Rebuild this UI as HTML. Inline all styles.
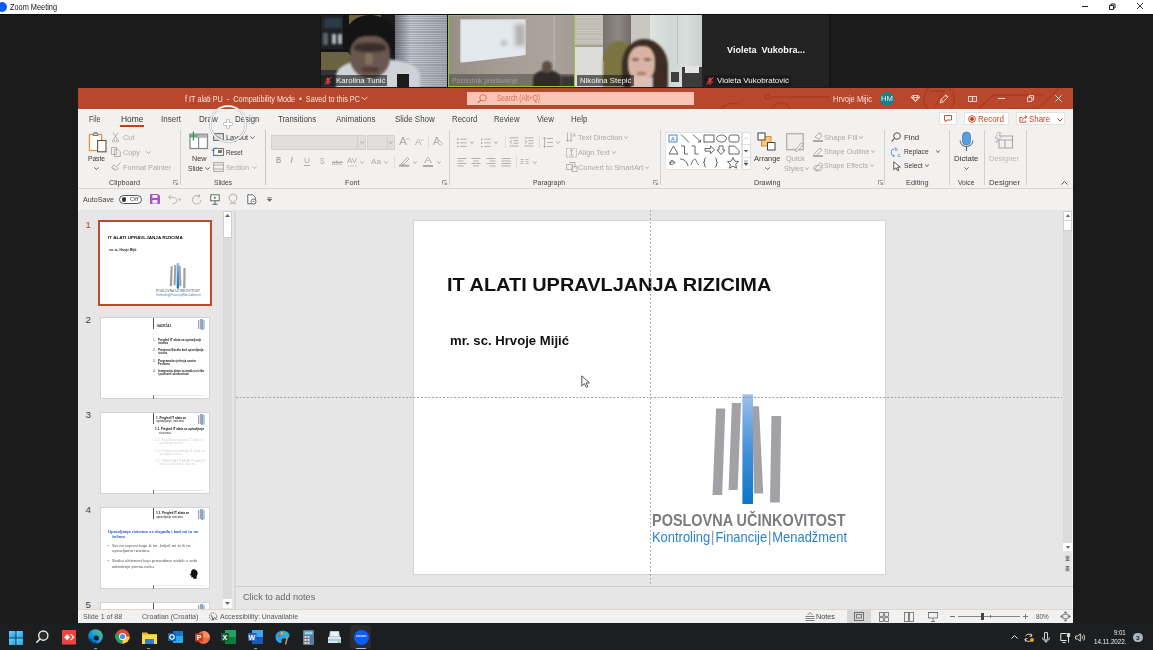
<!DOCTYPE html>
<html><head><meta charset="utf-8">
<style>
*{margin:0;padding:0;box-sizing:border-box}
html,body{width:1153px;height:650px;overflow:hidden;background:#1b1b1b;font-family:"Liberation Sans",sans-serif;position:relative}
.a{position:absolute}
.t{position:absolute;white-space:nowrap;line-height:1}
svg{position:absolute;overflow:visible}
</style></head><body>
<div class="a" style="left:0px;top:0px;width:1153px;height:14px;background:#fff;"></div>
<div class="a" style="left:0px;top:14px;width:1153px;height:1px;background:#0a0a0a;"></div>
<div class="a" style="left:-3px;top:2px;width:10px;height:10px;border-radius:50%;background:#0b5cff"></div>
<div class="t" style="left:10px;top:2.90px;font-size:8.5px;color:#111;font-weight:400;transform:scaleX(0.865);transform-origin:0 0;">Zoom Meeting</div>
<div class="a" style="left:1082px;top:6px;width:6px;height:1px;background:#222;"></div>
<svg style="left:1108.5px;top:2.5px;" width="7" height="7" viewBox="0 0 7 7"><path d="M.5 2.5h4v4h-4z M2 2.5V1h4v4H4.5" stroke="#222" stroke-width="1" fill="none"/></svg>
<svg style="left:1137px;top:3px;" width="6" height="6" viewBox="0 0 6 6"><path d="M0 0L6 6M6 0L0 6" stroke="#222" stroke-width=".9"/></svg>
<div class="a" style="left:320px;top:15px;width:510px;height:72px;background:#141414;"></div>
<div class="a" style="left:321px;top:15px;width:126px;height:72px;overflow:hidden;background:#6e6540"><div class="a" style="left:0px;top:0px;width:26px;height:36px;background:#1e2226;"></div><div class="a" style="left:3px;top:3px;width:18px;height:10px;background:#2d3a48;filter:blur(1.2px)"></div><div class="a" style="left:2px;top:18px;width:5px;height:12px;background:#5a6570;filter:blur(.9px)"></div><div class="a" style="left:11px;top:19px;width:4px;height:10px;background:#b4bcc4;filter:blur(.9px)"></div><div class="a" style="left:17px;top:19px;width:4px;height:10px;background:#b0b8c0;filter:blur(.9px)"></div><div class="a" style="left:0px;top:34px;width:28px;height:3px;background:#141414;"></div><div class="a" style="left:0px;top:37px;width:30px;height:22px;background:#6a6240;filter:blur(.5px)"></div><div class="a" style="left:0px;top:55px;width:20px;height:17px;background:#30333a;"></div><div class="a" style="left:22px;top:0px;width:6px;height:36px;background:#141414;"></div><div class="a" style="left:60px;top:0px;width:15px;height:48px;background:#1a1a1a;"></div><div class="a" style="left:74px;top:0px;width:52px;height:72px;background:repeating-linear-gradient(180deg,#c0c4cc 0 1px,#a4a9b2 1px 2.2px);filter:blur(.3px)"></div><div class="a" style="left:74px;top:0px;width:52px;height:72px;background:linear-gradient(90deg,rgba(30,30,40,.45),rgba(255,255,255,.05) 30%,rgba(30,30,40,.15));"></div><div class="a" style="left:15px;top:44px;width:84px;height:36px;background:#cfd3d8;border-radius:45% 45% 10% 10%;filter:blur(.8px)"></div><div class="a" style="left:76px;top:59px;width:12px;height:13px;background:#1c1c1c;filter:blur(.4px)"></div><div class="a" style="left:24px;top:0px;width:50px;height:46px;background:#141414;border-radius:48% 48% 40% 40%;filter:blur(.4px)"></div><div class="a" style="left:29px;top:21px;width:40px;height:42px;background:#6a5850;border-radius:40% 40% 48% 48%;filter:blur(.8px)"></div><div class="a" style="left:33px;top:28px;width:32px;height:9px;background:#3a2e2a;border-radius:40%;filter:blur(1.5px)"></div><div class="a" style="left:44px;top:38px;width:8px;height:12px;background:#85705f;border-radius:40%;filter:blur(1.2px)"></div><div class="a" style="left:40px;top:52px;width:18px;height:5px;background:#4e3e38;border-radius:40%;filter:blur(1.2px)"></div></div>
<div class="a" style="left:448px;top:15px;width:127px;height:72px;overflow:hidden;background:#9f968e;border:1px solid #8dc63f"><div class="a" style="left:0px;top:0px;width:127px;height:72px;background:linear-gradient(90deg,#978e86,#a59c94 40%,#aca49c 80%,#a39b93);"></div><div class="a" style="left:11px;top:3px;width:66px;height:44px;background:#e2e8ee;filter:blur(1.3px);clip-path:polygon(0 0,100% 0,100% 82%,0 100%)"></div><div class="a" style="left:66px;top:8px;width:10px;height:22px;background:#b4b2b0;filter:blur(2px)"></div><div class="a" style="left:52px;top:24px;width:6px;height:6px;background:#c4c8ce;filter:blur(1.5px)"></div><div class="a" style="left:104px;top:0px;width:2px;height:60px;background:#b5aea6;filter:blur(.6px)"></div><div class="a" style="left:0px;top:58px;width:127px;height:14px;background:rgba(70,66,62,.5);filter:blur(.5px)"></div><div class="a" style="left:84px;top:54px;width:28px;height:20px;background:#2f2b28;border-radius:45% 45% 0 0;filter:blur(1.2px)"></div><div class="a" style="left:93px;top:45px;width:10px;height:12px;background:#5e4e44;border-radius:45%;filter:blur(1px)"></div><div class="a" style="left:112px;top:60px;width:14px;height:12px;background:#3a3836;filter:blur(1px)"></div></div>
<div class="a" style="left:575px;top:15px;width:127px;height:72px;overflow:hidden;background:#d5d8d3"><div class="a" style="left:0px;top:0px;width:30px;height:31px;background:repeating-linear-gradient(180deg,#c9c7bd 0 1px,#bdbbb1 1px 2.5px);"></div><div class="a" style="left:0px;top:30px;width:30px;height:2px;background:#a89e8c;"></div><div class="a" style="left:0px;top:32px;width:30px;height:40px;background:#dcdcd8;"></div><div class="a" style="left:28px;top:0px;width:30px;height:46px;background:linear-gradient(90deg,#7a726e,#8f8783 50%,#726a66);"></div><div class="a" style="left:56px;top:0px;width:20px;height:72px;background:#c9c7bf;"></div><div class="a" style="left:75px;top:0px;width:52px;height:72px;background:linear-gradient(90deg,#dfe6e2,#cfd8d4 40%,#d9dfdc 70%,#c8cfcc);"></div><div class="a" style="left:102px;top:0px;width:1px;height:50px;background:#b8bfbc;"></div><div class="a" style="left:28px;top:26px;width:28px;height:46px;background:#7c7440;border-radius:50% 30% 0 0;filter:blur(.8px)"></div><div class="a" style="left:47px;top:24px;width:46px;height:52px;background:#3c2c24;border-radius:48% 52% 10% 20%;filter:blur(1.2px)"></div><div class="a" style="left:53px;top:31px;width:27px;height:36px;background:#d9b4a4;border-radius:44% 40% 46% 46%;filter:blur(.8px)"></div><div class="a" style="left:56px;top:62px;width:22px;height:12px;background:#dcc0b4;filter:blur(1px)"></div><div class="a" style="left:57px;top:43px;width:7px;height:3px;background:#8a6a5e;border-radius:40%;filter:blur(1px)"></div><div class="a" style="left:69px;top:43px;width:7px;height:3px;background:#8a6a5e;border-radius:40%;filter:blur(1px)"></div><div class="a" style="left:62px;top:57px;width:9px;height:3px;background:#a87868;border-radius:40%;filter:blur(1px)"></div><div class="a" style="left:96px;top:57px;width:8px;height:10px;background:#404040;"></div><div class="a" style="left:107px;top:52px;width:20px;height:20px;background:#3c3c3c;filter:blur(.4px)"></div><div class="a" style="left:110px;top:51px;width:14px;height:7px;background:#e4e4e2;filter:blur(.4px)"></div></div>
<div class="a" style="left:702px;top:15px;width:127px;height:72px;background:#232323;"></div>
<div class="t" style="left:727px;top:45.66px;font-size:9px;color:#fafafa;font-weight:700;transform:scaleX(1.006);transform-origin:0 0;">Violeta&nbsp; Vukobra...</div>
<div class="a" style="left:321px;top:75px;width:66px;height:11px;background:rgba(25,25,25,0.62);"></div>
<svg style="left:324.0px;top:76.5px;" width="8" height="8" viewBox="0 0 8 8"><path d="M4 0.5c-1 0-1.6.8-1.6 1.6v2.2c0 1 .7 1.6 1.6 1.6s1.6-.6 1.6-1.6V2.1C5.6 1.3 5 .5 4 .5z" fill="#e03a3a"/><path d="M1.5 4.2c0 1.5 1.1 2.5 2.5 2.5s2.5-1 2.5-2.5M4 6.7V8" stroke="#e03a3a" stroke-width=".8" fill="none"/><path d="M0.5 8L7.5 0" stroke="#e03a3a" stroke-width="1"/></svg>
<div class="t" style="left:335.5px;top:76.74px;font-size:8px;color:#f4f4f4;font-weight:400;transform:scaleX(0.976);transform-origin:0 0;">Karolina Tunić</div>
<div class="t" style="left:452px;top:76.64px;font-size:8px;color:rgba(200,200,220,0.5);font-weight:400;transform:scaleX(0.853);transform-origin:0 0;filter:blur(.6px);">Posrednik predavanje</div>
<div class="a" style="left:577px;top:75px;width:57px;height:11px;background:rgba(25,25,25,0.62);"></div>
<div class="t" style="left:579.5px;top:76.74px;font-size:8px;color:#f4f4f4;font-weight:400;transform:scaleX(0.973);transform-origin:0 0;">Nikolina Stepić</div>
<div class="a" style="left:704px;top:75px;width:87px;height:11px;background:rgba(25,25,25,0.62);"></div>
<svg style="left:705.5px;top:76.5px;" width="8" height="8" viewBox="0 0 8 8"><path d="M4 0.5c-1 0-1.6.8-1.6 1.6v2.2c0 1 .7 1.6 1.6 1.6s1.6-.6 1.6-1.6V2.1C5.6 1.3 5 .5 4 .5z" fill="#e03a3a"/><path d="M1.5 4.2c0 1.5 1.1 2.5 2.5 2.5s2.5-1 2.5-2.5M4 6.7V8" stroke="#e03a3a" stroke-width=".8" fill="none"/><path d="M0.5 8L7.5 0" stroke="#e03a3a" stroke-width="1"/></svg>
<div class="t" style="left:717px;top:76.74px;font-size:8px;color:#f4f4f4;font-weight:400;transform:scaleX(0.993);transform-origin:0 0;">Violeta Vukobratović</div>
<div class="a" style="left:78px;top:88px;width:995px;height:535px;background:#f3f1f0;"></div>
<div class="a" style="left:78px;top:88px;width:995px;height:21px;background:#b9472b;"></div>
<svg style="left:78px;top:88px;overflow:hidden" width="995" height="21" viewBox="0 0 995 21"><g stroke="#a53d22" stroke-width="1.4" fill="none" opacity=".9"><path d="M692 9H752"/><circle cx="689.5" cy="9" r="2.2"/><circle cx="703" cy="25" r="10"/><circle cx="861" cy="11" r="15"/><path d="M852 3h14l-9 16"/><path d="M770 26l8-8 M640 26c4-10 14-12 20-10"/><path d="M930 21h30l20-20 M960 21l26-26 M900 21l16-14h50"/></g></svg>
<div class="t" style="left:185px;top:95.15px;font-size:8.4px;color:#f8e3dc;font-weight:400;transform:scaleX(0.868);transform-origin:0 0;">f IT alati PU&nbsp; -&nbsp; Compatibility Mode&nbsp; •&nbsp; Saved to this PC</div>
<svg style="left:361px;top:96px;" width="7" height="5" viewBox="0 0 7 5"><path d="M0.5 0.8L3.5 3.8L6.5 0.8" stroke="#f8e3dc" stroke-width="1" fill="none"/></svg>
<div class="a" style="left:467px;top:92px;width:227px;height:13px;background:#f9c4b3;"></div>
<svg style="left:477px;top:94px;" width="10" height="10" viewBox="0 0 10 10"><circle cx="6" cy="3.8" r="3.2" stroke="#d9735a" stroke-width="1" fill="none"/><path d="M3.8 6L0.8 9" stroke="#d9735a" stroke-width="1.1"/></svg>
<div class="t" style="left:497px;top:95.05px;font-size:8.2px;color:#d46d55;font-weight:400;transform:scaleX(0.791);transform-origin:0 0;">Search (Alt+Q)</div>
<div class="t" style="left:833px;top:94.75px;font-size:8.4px;color:#f8e0d8;font-weight:400;transform:scaleX(0.901);transform-origin:0 0;">Hrvoje Mijic</div>
<div class="a" style="left:879.5px;top:91.5px;width:14px;height:14px;border-radius:50%;background:#16808c"></div>
<div class="t" style="left:880.5px;top:95.13px;font-size:7.2px;color:#e8f4f4;font-weight:400;transform:scaleX(1.073);transform-origin:0 0;">HM</div>
<svg style="left:911px;top:95px;" width="9" height="7" viewBox="0 0 9 7"><path d="M1.5 0.5h6l1.2 2L4.5 6.5L0.3 2.5z M0.3 2.5h8.4 M3 0.5l-.8 2L4.5 6.5l2.3-4l-.8-2" stroke="#f5ddd5" stroke-width=".9" fill="none"/></svg>
<svg style="left:939px;top:94px;" width="10" height="10" viewBox="0 0 10 10"><path d="M1 9l1-3.5L7 .8l2 2L4.2 7.8z M2 5.5l2.5 2.3 M6.4 1.5l2 2" stroke="#f5ddd5" stroke-width=".9" fill="none"/></svg>
<svg style="left:968px;top:95.5px;" width="9" height="6" viewBox="0 0 9 6"><rect x=".5" y=".5" width="8" height="5" stroke="#f5ddd5" stroke-width=".9" fill="none"/><path d="M4.5 .5v5 M2.5 2.8h1 M5.5 2.8h1" stroke="#f5ddd5" stroke-width=".9"/></svg>
<div class="a" style="left:998px;top:98px;width:7px;height:1px;background:#f5ddd5;"></div>
<svg style="left:1027px;top:95px;" width="7" height="7" viewBox="0 0 7 7"><path d="M.5 2.2h4.3v4.3H.5z M2.2 2.2V.5h4.3v4.3H4.8" stroke="#f5ddd5" stroke-width=".9" fill="none"/></svg>
<svg style="left:1055px;top:95px;" width="7" height="7" viewBox="0 0 7 7"><path d="M.3 .3L6.7 6.7M6.7 .3L.3 6.7" stroke="#f5ddd5" stroke-width="1"/></svg>
<div class="t" style="left:88.7px;top:114.90px;font-size:8.5px;color:#444;font-weight:400;transform:scaleX(0.832);transform-origin:0 0;">File</div>
<div class="t" style="left:120.7px;top:114.90px;font-size:8.5px;color:#2e2e2e;font-weight:400;transform:scaleX(0.987);transform-origin:0 0;">Home</div>
<div class="t" style="left:160.5px;top:114.90px;font-size:8.5px;color:#444;font-weight:400;transform:scaleX(0.945);transform-origin:0 0;">Insert</div>
<div class="t" style="left:198.6px;top:114.90px;font-size:8.5px;color:#444;font-weight:400;transform:scaleX(0.947);transform-origin:0 0;">Draw</div>
<div class="t" style="left:234.9px;top:114.90px;font-size:8.5px;color:#444;font-weight:400;transform:scaleX(0.926);transform-origin:0 0;">Design</div>
<div class="t" style="left:277.9px;top:114.90px;font-size:8.5px;color:#444;font-weight:400;transform:scaleX(0.923);transform-origin:0 0;">Transitions</div>
<div class="t" style="left:335.5px;top:114.90px;font-size:8.5px;color:#444;font-weight:400;transform:scaleX(0.939);transform-origin:0 0;">Animations</div>
<div class="t" style="left:394.5px;top:114.90px;font-size:8.5px;color:#444;font-weight:400;transform:scaleX(0.933);transform-origin:0 0;">Slide Show</div>
<div class="t" style="left:451.5px;top:114.90px;font-size:8.5px;color:#444;font-weight:400;transform:scaleX(0.930);transform-origin:0 0;">Record</div>
<div class="t" style="left:494.3px;top:114.90px;font-size:8.5px;color:#444;font-weight:400;transform:scaleX(0.915);transform-origin:0 0;">Review</div>
<div class="t" style="left:537.1px;top:114.90px;font-size:8.5px;color:#444;font-weight:400;transform:scaleX(0.924);transform-origin:0 0;">View</div>
<div class="t" style="left:571.2px;top:114.90px;font-size:8.5px;color:#444;font-weight:400;transform:scaleX(0.932);transform-origin:0 0;">Help</div>
<div class="a" style="left:120px;top:125px;width:24px;height:2px;background:#c43e1c;"></div>
<div class="a" style="left:939px;top:112px;width:18px;height:13px;background:#fff;border:1px solid #e4e2e1"></div>
<svg style="left:944px;top:115px;" width="8" height="7" viewBox="0 0 8 7"><path d="M.5 .5h7v4.5H3L1.2 6.6V5H.5z" stroke="#c43e1c" stroke-width=".9" fill="none"/></svg>
<div class="a" style="left:964px;top:112px;width:45px;height:13px;background:#fff;border:1px solid #e4e2e1"></div>
<svg style="left:968px;top:114.5px;" width="8" height="8" viewBox="0 0 8 8"><circle cx="4" cy="4" r="3.4" stroke="#c43e1c" stroke-width=".9" fill="none"/><circle cx="4" cy="4" r="2" fill="#c43e1c"/></svg>
<div class="t" style="left:978px;top:114.65px;font-size:8.6px;color:#c43e1c;font-weight:400;transform:scaleX(0.939);transform-origin:0 0;">Record</div>
<div class="a" style="left:1016px;top:112px;width:49px;height:13px;background:#fff;border:1px solid #e4e2e1"></div>
<svg style="left:1019px;top:114px;" width="9" height="9" viewBox="0 0 9 9"><path d="M3 3.5H.8v4.7h6V6.5 M3 7c.3-2.5 1.8-4 4.5-4 M5.8 1.2l2 1.8-2 1.8" stroke="#c43e1c" stroke-width=".9" fill="none"/></svg>
<div class="t" style="left:1029px;top:114.65px;font-size:8.6px;color:#c43e1c;font-weight:400;transform:scaleX(0.916);transform-origin:0 0;">Share</div>
<svg style="left:1057px;top:117.5px;" width="6" height="4" viewBox="0 0 6 4"><path d="M.5 .5l2.5 2.5 2.5-2.5" stroke="#c43e1c" stroke-width="1" fill="none"/></svg>
<div class="a" style="left:78px;top:188px;width:995px;height:1px;background:#d8d6d5;"></div>
<svg style="left:88px;top:132px;" width="19" height="21" viewBox="0 0 19 21"><path d="M1.5 2.5h3.5M10 2.5h3.5v7 M1.5 2.5v16h7" stroke="#e8922e" stroke-width="1.2" fill="#fbf3ea"/><rect x="1.5" y="2.5" width="12" height="16" fill="#fff" stroke="#e8922e" stroke-width="1.2"/><path d="M5 3.5V1.8h5v1.7z" fill="#fff" stroke="#777" stroke-width="1"/><path d="M5.5 1.2c.3-1 3.7-1 4 0" stroke="#777" fill="none"/><rect x="9.6" y="8.5" width="8.4" height="11.3" fill="#fff" stroke="#555" stroke-width="1.1"/></svg>
<div class="t" style="left:88px;top:154.68px;font-size:7.3px;color:#383838;font-weight:400;transform:scaleX(0.910);transform-origin:0 0;">Paste</div>
<svg style="left:93.5px;top:166.5px;" width="5" height="3" viewBox="0 0 5 3"><path d="M.4 .4L2.5 2.6L4.6 .4" stroke="#555" stroke-width=".9" fill="none"/></svg>
<svg style="left:112px;top:132px;" width="7" height="11" viewBox="0 0 7 11"><path d="M1 .5l4.5 7 M6 .5l-4.5 7" stroke="#acaaa9" stroke-width=".9"/><circle cx="1.6" cy="9" r="1.3" stroke="#acaaa9" fill="none" stroke-width=".8"/><circle cx="5.4" cy="9" r="1.3" stroke="#acaaa9" fill="none" stroke-width=".8"/></svg>
<div class="t" style="left:123px;top:134.48px;font-size:7.3px;color:#acaaa9;font-weight:400;transform:scaleX(1.012);transform-origin:0 0;">Cut</div>
<svg style="left:111px;top:147px;" width="10" height="10" viewBox="0 0 10 10"><path d="M.5 .5h5v7h-5z M3.5 2.5h3.5l2.3 2.3v4.7H3.5z" stroke="#acaaa9" stroke-width=".9" fill="#f3f1f0"/></svg>
<div class="t" style="left:123px;top:149.08px;font-size:7.3px;color:#acaaa9;font-weight:400;transform:scaleX(0.997);transform-origin:0 0;">Copy</div>
<svg style="left:146.3px;top:150.9px;" width="5" height="3" viewBox="0 0 5 3"><path d="M.4 .4L2.5 2.6L4.6 .4" stroke="#acaaa9" stroke-width=".9" fill="none"/></svg>
<svg style="left:111px;top:162px;" width="10" height="9" viewBox="0 0 10 9"><path d="M9.5.5L5 5 M4 3.5l3 3-2 2-4.5-2.5 2-3z M2 5.5l2 2" stroke="#acaaa9" stroke-width=".9" fill="none"/></svg>
<div class="t" style="left:123px;top:163.98px;font-size:7.3px;color:#acaaa9;font-weight:400;transform:scaleX(0.999);transform-origin:0 0;">Format Painter</div>
<div class="t" style="left:109px;top:179.18px;font-size:7.3px;color:#444;font-weight:400;transform:scaleX(0.992);transform-origin:0 0;">Clipboard</div>
<svg style="left:173px;top:180.3px;" width="5" height="5" viewBox="0 0 5 5"><path d="M.5 4.5V.5h4 M2 2l2.5 2.5 M4.5 2.5v2h-2" stroke="#888" stroke-width=".8" fill="none"/></svg>
<div class="a" style="left:180px;top:130px;width:1px;height:55px;background:#d2d0cf;"></div>
<svg style="left:189px;top:131px;" width="20" height="19" viewBox="0 0 20 19"><rect x="1" y="3.2" width="17.5" height="14.3" fill="#fff" stroke="#8a8a8a" stroke-width="1.3"/><path d="M1 6h17.5 M9.6 6v11.5" stroke="#8a8a8a" stroke-width="1.2"/><rect x="1.6" y="3.8" width="16.3" height="2" fill="#b5b5b5"/><path d="M4.4 .5v9 M.2 5h8.5" stroke="#2e9e47" stroke-width="1.2"/></svg>
<div class="t" style="left:191.5px;top:154.68px;font-size:7.3px;color:#383838;font-weight:400;transform:scaleX(0.993);transform-origin:0 0;">New</div>
<div class="t" style="left:188px;top:164.68px;font-size:7.3px;color:#383838;font-weight:400;transform:scaleX(0.924);transform-origin:0 0;">Slide</div>
<svg style="left:205.0px;top:166.7px;" width="5" height="3" viewBox="0 0 5 3"><path d="M.4 .4L2.5 2.6L4.6 .4" stroke="#555" stroke-width=".9" fill="none"/></svg>
<svg style="left:213px;top:133px;" width="11" height="8" viewBox="0 0 11 8"><rect x=".6" y=".6" width="9.8" height="6.8" fill="#ddd" stroke="#666" stroke-width="1"/><path d="M2 2l6 4" stroke="#666" stroke-width=".8"/></svg>
<div class="t" style="left:226px;top:134.48px;font-size:7.3px;color:#383838;font-weight:400;transform:scaleX(1.004);transform-origin:0 0;">Layout</div>
<svg style="left:249.5px;top:136.1px;" width="5" height="3" viewBox="0 0 5 3"><path d="M.4 .4L2.5 2.6L4.6 .4" stroke="#555" stroke-width=".9" fill="none"/></svg>
<svg style="left:212px;top:147px;" width="12" height="9" viewBox="0 0 12 9"><rect x="1.6" y="1.6" width="9.8" height="6.8" fill="#fff" stroke="#666" stroke-width="1"/><path d="M1 4c0-2 1.5-3 3.5-3 M1 4l-.8-1.4 M1 4l1.5-.8" stroke="#2e7bd0" stroke-width="1" fill="none"/><rect x="6" y="3" width="4" height="3" fill="#777"/></svg>
<div class="t" style="left:226px;top:149.08px;font-size:7.3px;color:#383838;font-weight:400;transform:scaleX(0.866);transform-origin:0 0;">Reset</div>
<svg style="left:213px;top:162px;" width="11" height="10" viewBox="0 0 11 10"><rect x=".6" y=".6" width="9.8" height="8.8" fill="#f3f1f0" stroke="#acaaa9" stroke-width="1"/><path d="M.6 3h9.8 M.6 7h9.8" stroke="#acaaa9" stroke-width="1"/></svg>
<div class="t" style="left:226px;top:163.98px;font-size:7.3px;color:#acaaa9;font-weight:400;transform:scaleX(0.945);transform-origin:0 0;">Section</div>
<svg style="left:251.5px;top:165.7px;" width="5" height="3" viewBox="0 0 5 3"><path d="M.4 .4L2.5 2.6L4.6 .4" stroke="#acaaa9" stroke-width=".9" fill="none"/></svg>
<div class="t" style="left:214px;top:179.18px;font-size:7.3px;color:#444;font-weight:400;transform:scaleX(0.906);transform-origin:0 0;">Slides</div>
<div class="a" style="left:265px;top:130px;width:1px;height:55px;background:#c8c6c5;"></div>
<div class="a" style="left:271px;top:135px;width:95px;height:15px;background:#e1dfde;border:1px solid #d3d1d0"></div>
<div class="a" style="left:356.5px;top:136px;width:1px;height:13px;background:#d3d1d0;"></div>
<svg style="left:359.5px;top:141.3px;" width="4" height="3" viewBox="0 0 4 3"><path d="M.4 .4L2.0 2.6L3.6 .4" stroke="#acaaa9" stroke-width=".9" fill="none"/></svg>
<div class="a" style="left:367px;top:135px;width:28px;height:15px;background:#e1dfde;border:1px solid #d3d1d0"></div>
<div class="a" style="left:386.5px;top:136px;width:1px;height:13px;background:#d3d1d0;"></div>
<svg style="left:389.0px;top:141.3px;" width="4" height="3" viewBox="0 0 4 3"><path d="M.4 .4L2.0 2.6L3.6 .4" stroke="#acaaa9" stroke-width=".9" fill="none"/></svg>
<div class="t" style="left:399px;top:135.90px;font-size:11px;color:#acaaa9;font-weight:400;transform:scaleX(1.089);transform-origin:0 0;">A</div>
<svg style="left:405.5px;top:137.5px;" width="4" height="2" viewBox="0 0 4 2"><path d="M.3 1.8L2 .3L3.7 1.8" stroke="#acaaa9" stroke-width=".7" fill="none"/></svg>
<div class="t" style="left:415px;top:138.10px;font-size:8.5px;color:#acaaa9;font-weight:400;transform:scaleX(1.146);transform-origin:0 0;">A</div>
<svg style="left:420px;top:138.5px;" width="4" height="2" viewBox="0 0 4 2"><path d="M.3 .3L2 1.8L3.7 .3" stroke="#acaaa9" stroke-width=".7" fill="none"/></svg>
<div class="a" style="left:427.5px;top:136px;width:1px;height:12px;background:#dedcdb;"></div>
<div class="t" style="left:432.5px;top:135.90px;font-size:11px;color:#acaaa9;font-weight:400;transform:scaleX(1.021);transform-origin:0 0;">A</div>
<svg style="left:437px;top:140px;" width="6" height="6" viewBox="0 0 6 6"><path d="M2.5.5l3 3-2 2-3-3z" stroke="#acaaa9" stroke-width=".8" fill="#f3f1f0"/></svg>
<div class="t" style="left:275.5px;top:157.35px;font-size:8.2px;color:#acaaa9;font-weight:700;transform:scaleX(0.895);transform-origin:0 0;">B</div>
<div class="t" style="left:290.3px;top:157.35px;font-size:8.2px;color:#acaaa9;font-weight:400;transform:scaleX(1.403);transform-origin:0 0;font-style:italic;">I</div>
<div class="t" style="left:304px;top:157.14px;font-size:8px;color:#acaaa9;font-weight:400;transform:scaleX(1.038);transform-origin:0 0;">U</div>
<div class="a" style="left:304px;top:165px;width:6px;height:1px;background:#acaaa9;"></div>
<div class="t" style="left:320px;top:157.25px;font-size:8.4px;color:#acaaa9;font-weight:400;transform:scaleX(0.804);transform-origin:0 0;">S</div>
<div class="t" style="left:332.3px;top:158.63px;font-size:7px;color:#acaaa9;font-weight:400;transform:scaleX(0.885);transform-origin:0 0;">abc</div>
<div class="a" style="left:332px;top:161.8px;width:11px;height:0.8px;background:#acaaa9;"></div>
<div class="t" style="left:347px;top:156.64px;font-size:7.6px;color:#acaaa9;font-weight:400;transform:scaleX(1.044);transform-origin:0 0;">AV</div>
<svg style="left:347px;top:164.5px;" width="10" height="2" viewBox="0 0 10 2"><path d="M.5 1h9" stroke="#acaaa9" stroke-width=".8" stroke-dasharray="1.5 1"/></svg>
<svg style="left:360.0px;top:160.5px;" width="4" height="3" viewBox="0 0 4 3"><path d="M.4 .4L2.0 2.6L3.6 .4" stroke="#acaaa9" stroke-width=".9" fill="none"/></svg>
<div class="t" style="left:371px;top:158.14px;font-size:8px;color:#acaaa9;font-weight:400;transform:scaleX(1.021);transform-origin:0 0;">Aa</div>
<svg style="left:384.0px;top:160.5px;" width="4" height="3" viewBox="0 0 4 3"><path d="M.4 .4L2.0 2.6L3.6 .4" stroke="#acaaa9" stroke-width=".9" fill="none"/></svg>
<div class="a" style="left:394.4px;top:156px;width:1px;height:12px;background:#dedcdb;"></div>
<svg style="left:399px;top:156px;" width="11" height="11" viewBox="0 0 11 11"><path d="M3 7l5.5-5.5 1.5 1.5L4.5 8.5H3z M1.5 8.5h3" stroke="#acaaa9" stroke-width=".9" fill="none"/><rect x="0" y="8.7" width="10.2" height="2" fill="#acaaa9"/></svg>
<svg style="left:412.6px;top:160.5px;" width="4" height="3" viewBox="0 0 4 3"><path d="M.4 .4L2.0 2.6L3.6 .4" stroke="#acaaa9" stroke-width=".9" fill="none"/></svg>
<div class="t" style="left:424px;top:156.45px;font-size:8.4px;color:#acaaa9;font-weight:400;transform:scaleX(1.430);transform-origin:0 0;">A</div>
<div class="a" style="left:423px;top:164.7px;width:10px;height:2px;background:#acaaa9;"></div>
<svg style="left:436.7px;top:160.5px;" width="4" height="3" viewBox="0 0 4 3"><path d="M.4 .4L2.0 2.6L3.6 .4" stroke="#acaaa9" stroke-width=".9" fill="none"/></svg>
<div class="t" style="left:345px;top:179.18px;font-size:7.3px;color:#444;font-weight:400;transform:scaleX(0.993);transform-origin:0 0;">Font</div>
<svg style="left:441.6px;top:180.3px;" width="5" height="5" viewBox="0 0 5 5"><path d="M.5 4.5V.5h4 M2 2l2.5 2.5 M4.5 2.5v2h-2" stroke="#888" stroke-width=".8" fill="none"/></svg>
<div class="a" style="left:448.9px;top:130px;width:1px;height:55px;background:#d2d0cf;"></div>
<svg style="left:456.5px;top:137.5px;" width="10" height="10" viewBox="0 0 10 10"><rect x="0" y="0.5" width="1.6" height="1.6" fill="#acaaa9"/><path d="M3.2 1.2h6.5" stroke="#acaaa9" stroke-width=".9"/><rect x="0" y="4.1" width="1.6" height="1.6" fill="#acaaa9"/><path d="M3.2 4.8h6.5" stroke="#acaaa9" stroke-width=".9"/><rect x="0" y="7.7" width="1.6" height="1.6" fill="#acaaa9"/><path d="M3.2 8.4h6.5" stroke="#acaaa9" stroke-width=".9"/></svg>
<svg style="left:469.5px;top:141.0px;" width="4" height="3" viewBox="0 0 4 3"><path d="M.4 .4L2.0 2.6L3.6 .4" stroke="#acaaa9" stroke-width=".9" fill="none"/></svg>
<svg style="left:480.5px;top:137.5px;" width="10" height="10" viewBox="0 0 10 10"><rect x="0" y="0.6" width="1.4" height="1.8" fill="#acaaa9"/><path d="M3.2 1.2h6.5" stroke="#acaaa9" stroke-width=".9"/><rect x="0" y="4.2" width="1.4" height="1.8" fill="#acaaa9"/><path d="M3.2 4.8h6.5" stroke="#acaaa9" stroke-width=".9"/><rect x="0" y="7.800000000000001" width="1.4" height="1.8" fill="#acaaa9"/><path d="M3.2 8.4h6.5" stroke="#acaaa9" stroke-width=".9"/></svg>
<svg style="left:494.0px;top:141.0px;" width="4" height="3" viewBox="0 0 4 3"><path d="M.4 .4L2.0 2.6L3.6 .4" stroke="#acaaa9" stroke-width=".9" fill="none"/></svg>
<div class="a" style="left:504.5px;top:136px;width:1px;height:12px;background:#dedcdb;"></div>
<svg style="left:509px;top:137px;" width="10" height="10" viewBox="0 0 10 10"><path d="M.5 .8h9 M4.5 3.6h5 M4.5 6.2h5 M.5 9h9 M3 3.2L.8 4.9 3 6.6" stroke="#acaaa9" stroke-width=".9" fill="none"/></svg>
<svg style="left:524px;top:137px;" width="10" height="10" viewBox="0 0 10 10"><path d="M.5 .8h9 M4.5 3.6h5 M4.5 6.2h5 M.5 9h9 M.8 3.2L3 4.9 .8 6.6" stroke="#acaaa9" stroke-width=".9" fill="none"/></svg>
<div class="a" style="left:538.5px;top:136px;width:1px;height:12px;background:#dedcdb;"></div>
<svg style="left:543px;top:136.5px;" width="10" height="11" viewBox="0 0 10 11"><path d="M4 1.5h6 M4 5.5h6 M4 9.5h6 M1.5 .5v10 M.2 1.8l1.3-1.3 1.3 1.3 M.2 9.2l1.3 1.3 1.3-1.3" stroke="#acaaa9" stroke-width=".9" fill="none"/></svg>
<svg style="left:556.0px;top:141.0px;" width="4" height="3" viewBox="0 0 4 3"><path d="M.4 .4L2.0 2.6L3.6 .4" stroke="#acaaa9" stroke-width=".9" fill="none"/></svg>
<svg style="left:566px;top:132px;" width="11" height="11" viewBox="0 0 11 11"><path d="M1.5 .5v9 M.2 8l1.3 1.5 1.3-1.5 M5 .5v9 M3.7 8l1.3 1.5 1.3-1.5" stroke="#acaaa9" stroke-width=".9" fill="none"/><text x="6.5" y="5" font-size="5" fill="#acaaa9" font-family="Liberation Sans">A</text></svg>
<div class="t" style="left:577.6px;top:134.48px;font-size:7.3px;color:#acaaa9;font-weight:400;transform:scaleX(1.004);transform-origin:0 0;">Text Direction</div>
<svg style="left:624.0px;top:136.2px;" width="4" height="3" viewBox="0 0 4 3"><path d="M.4 .4L2.0 2.6L3.6 .4" stroke="#acaaa9" stroke-width=".9" fill="none"/></svg>
<svg style="left:565.5px;top:147.5px;" width="11" height="10" viewBox="0 0 11 10"><rect x=".5" y=".5" width="10" height="8.5" stroke="#acaaa9" fill="none" stroke-width=".9" stroke-dasharray="2 1"/><path d="M5.5 1.5v6.5 M4 3l1.5-1.5L7 3 M4 6.5L5.5 8 7 6.5" stroke="#acaaa9" stroke-width=".8" fill="none"/></svg>
<div class="t" style="left:577.6px;top:149.28px;font-size:7.3px;color:#acaaa9;font-weight:400;transform:scaleX(1.012);transform-origin:0 0;">Align Text</div>
<svg style="left:612.0px;top:151.0px;" width="4" height="3" viewBox="0 0 4 3"><path d="M.4 .4L2.0 2.6L3.6 .4" stroke="#acaaa9" stroke-width=".9" fill="none"/></svg>
<svg style="left:565.5px;top:162px;" width="12" height="10" viewBox="0 0 12 10"><path d="M.5 2.5h6v5h-6z M3 .5h6v5 M6 4.5h5v5H6z" stroke="#acaaa9" stroke-width=".9" fill="#f3f1f0"/></svg>
<div class="t" style="left:577.6px;top:164.08px;font-size:7.3px;color:#acaaa9;font-weight:400;transform:scaleX(1.014);transform-origin:0 0;">Convert to SmartArt</div>
<svg style="left:645.0px;top:165.8px;" width="4" height="3" viewBox="0 0 4 3"><path d="M.4 .4L2.0 2.6L3.6 .4" stroke="#acaaa9" stroke-width=".9" fill="none"/></svg>
<svg style="left:456.5px;top:157.5px;" width="10" height="9" viewBox="0 0 10 9"><path d="M.5 .5h9 M.5 3h6 M.5 5.5h9 M.5 8h6" stroke="#acaaa9" stroke-width=".9"/></svg>
<svg style="left:471px;top:157.5px;" width="10" height="9" viewBox="0 0 10 9"><path d="M.5 .5h9 M2 3h6 M.5 5.5h9 M2 8h6" stroke="#acaaa9" stroke-width=".9"/></svg>
<svg style="left:486px;top:157.5px;" width="10" height="9" viewBox="0 0 10 9"><path d="M.5 .5h9 M3.5 3h6 M.5 5.5h9 M3.5 8h6" stroke="#acaaa9" stroke-width=".9"/></svg>
<svg style="left:501px;top:157.5px;" width="10" height="9" viewBox="0 0 10 9"><path d="M.5 .5h9 M.5 3h9 M.5 5.5h9 M.5 8h9" stroke="#acaaa9" stroke-width=".9"/></svg>
<div class="a" style="left:515.6px;top:156px;width:1px;height:12px;background:#dedcdb;"></div>
<svg style="left:520px;top:158.5px;" width="9" height="6" viewBox="0 0 9 6"><path d="M.5 .5h3 M5.5 .5h3 M.5 2.5h3 M5.5 2.5h3 M.5 4.5h3 M5.5 4.5h3" stroke="#acaaa9" stroke-width=".8"/></svg>
<svg style="left:532.5px;top:160.5px;" width="4" height="3" viewBox="0 0 4 3"><path d="M.4 .4L2.0 2.6L3.6 .4" stroke="#acaaa9" stroke-width=".9" fill="none"/></svg>
<div class="t" style="left:533px;top:178.98px;font-size:7.3px;color:#444;font-weight:400;transform:scaleX(0.939);transform-origin:0 0;">Paragraph</div>
<svg style="left:652.5px;top:180.3px;" width="5" height="5" viewBox="0 0 5 5"><path d="M.5 4.5V.5h4 M2 2l2.5 2.5 M4.5 2.5v2h-2" stroke="#888" stroke-width=".8" fill="none"/></svg>
<div class="a" style="left:659.7px;top:130px;width:1px;height:55px;background:#d2d0cf;"></div>
<div class="a" style="left:665px;top:131.5px;width:77px;height:38px;background:#fff;border:1px solid #e6e4e3"></div>
<svg style="left:668px;top:134px;" width="76" height="36" viewBox="0 0 76 36"><g stroke="#555" stroke-width=".9" fill="none"><rect x="1" y="1" width="8" height="7" stroke="#2e7bd0"/><text x="2.7" y="7" font-size="6" fill="#2e7bd0" stroke="none" font-family="Liberation Sans">A</text><path d="M13 .5l8 8 M25 .5l7.5 7.5 M32.5 8v-2.5 M32.5 8h-2.5"/><rect x="36" y="1" width="10" height="7"/><ellipse cx="53.5" cy="4.5" rx="5" ry="3.5"/><rect x="61" y="1" width="10" height="7" rx="2"/><path d="M1 20l4.5-8 4.5 8z M13 12h3.5v8H20 M23.5 12h3.5v8h3.5 M37 14.5h5.5v-2.5l4 3.8-4 3.8v-2.5H37z M51 12h4v4h2l-4 4.5-4-4.5h2z M61 20V12h5.5l4.5 4.5V20z"/><path d="M2.5 31c-2-3 1-6 3-4s-1 5-3 3 3-3 5-1 M12 25c4 0 7 2.5 8 7 M23 31c1.5-5 3-6 4-6s2 5 4 6 M38 24c-1.5 0-1.5 1-1.5 3s-1 1.5-1.5 1.5c.5 0 1.5 0 1.5 1.5s0 3 1.5 3 M47 24c1.5 0 1.5 1 1.5 3s1 1.5 1.5 1.5c-.5 0-1.5 0-1.5 1.5s0 3-1.5 3 M65 23.5l1.7 3.6 3.9.5-2.9 2.7.8 3.9-3.5-2-3.5 2 .8-3.9-2.9-2.7 3.9-.5z"/></g></svg>
<div class="a" style="left:741.5px;top:131.5px;width:9px;height:38px;background:#fff;border:1px solid #e1dfde"></div>
<div class="a" style="left:742px;top:144px;width:8px;height:1px;background:#e1dfde;"></div>
<div class="a" style="left:742px;top:157px;width:8px;height:1px;background:#e1dfde;"></div>
<svg style="left:743.5px;top:136.5px;" width="5" height="3" viewBox="0 0 5 3"><path d="M.5 2.5L2.5 .5l2 2" stroke="#bbb" stroke-width=".8" fill="none"/></svg>
<svg style="left:744px;top:149.5px;" width="4" height="3" viewBox="0 0 4 3"><path d="M0 0h4L2 2.5z" fill="#555"/></svg>
<svg style="left:744px;top:161px;" width="4" height="5" viewBox="0 0 4 5"><path d="M0 0h4 M0 2h4L2 4.5z" stroke="#555" stroke-width=".6" fill="#555"/></svg>
<svg style="left:757px;top:132px;" width="20" height="20" viewBox="0 0 20 20"><rect x="4.5" y="4.5" width="9.5" height="9.5" fill="#f8c77a" stroke="#e38b2c" stroke-width="1"/><rect x="1" y="1" width="7" height="7" fill="#fff" stroke="#444" stroke-width="1"/><rect x="10.5" y="10.5" width="7.5" height="7.5" fill="#fff" stroke="#444" stroke-width="1"/></svg>
<div class="t" style="left:753.5px;top:154.68px;font-size:7.3px;color:#383838;font-weight:400;transform:scaleX(1.020);transform-origin:0 0;">Arrange</div>
<svg style="left:764.5px;top:166.5px;" width="5" height="3" viewBox="0 0 5 3"><path d="M.4 .4L2.5 2.6L4.6 .4" stroke="#555" stroke-width=".9" fill="none"/></svg>
<svg style="left:786px;top:133px;" width="20" height="19" viewBox="0 0 20 19"><rect x=".7" y=".7" width="16.5" height="16" fill="#f0eeed" stroke="#acaaa9" stroke-width="1.2"/><path d="M9 18l6-8 3 .5-7 8z" fill="#f3f1f0" stroke="#acaaa9" stroke-width=".9"/></svg>
<div class="t" style="left:786px;top:154.68px;font-size:7.3px;color:#acaaa9;font-weight:400;transform:scaleX(1.018);transform-origin:0 0;">Quick</div>
<div class="t" style="left:783.5px;top:164.88px;font-size:7.3px;color:#acaaa9;font-weight:400;transform:scaleX(0.981);transform-origin:0 0;">Styles</div>
<svg style="left:805.0px;top:166.5px;" width="4" height="3" viewBox="0 0 4 3"><path d="M.4 .4L2.0 2.6L3.6 .4" stroke="#acaaa9" stroke-width=".9" fill="none"/></svg>
<svg style="left:813px;top:131px;" width="11" height="11" viewBox="0 0 11 11"><path d="M2 6l4-4 3 3-3 3z M6.5 1l2 2" stroke="#acaaa9" stroke-width=".9" fill="none"/><rect x="0" y="9" width="10" height="2" fill="#acaaa9"/></svg>
<div class="t" style="left:824px;top:133.78px;font-size:7.3px;color:#acaaa9;font-weight:400;transform:scaleX(1.032);transform-origin:0 0;">Shape Fill</div>
<svg style="left:859.0px;top:135.7px;" width="4" height="3" viewBox="0 0 4 3"><path d="M.4 .4L2.0 2.6L3.6 .4" stroke="#acaaa9" stroke-width=".9" fill="none"/></svg>
<svg style="left:813px;top:145.5px;" width="11" height="11" viewBox="0 0 11 11"><path d="M1 8l6-6 2 2-6 6H1z" stroke="#acaaa9" stroke-width=".9" fill="none"/><rect x="0" y="9.2" width="10" height="1.8" fill="#acaaa9"/></svg>
<div class="t" style="left:824px;top:148.08px;font-size:7.3px;color:#acaaa9;font-weight:400;transform:scaleX(0.984);transform-origin:0 0;">Shape Outline</div>
<svg style="left:871.0px;top:149.9px;" width="4" height="3" viewBox="0 0 4 3"><path d="M.4 .4L2.0 2.6L3.6 .4" stroke="#acaaa9" stroke-width=".9" fill="none"/></svg>
<svg style="left:813px;top:160.5px;" width="11" height="10" viewBox="0 0 11 10"><path d="M2 7.5l5-6 3 2.5-5 6H3z M2 7.5l3 2" stroke="#acaaa9" stroke-width=".9" fill="none"/><ellipse cx="5" cy="7" rx="4.5" ry="2.5" stroke="#acaaa9" stroke-width=".8" fill="none"/></svg>
<div class="t" style="left:824px;top:162.28px;font-size:7.3px;color:#acaaa9;font-weight:400;transform:scaleX(0.971);transform-origin:0 0;">Shape Effects</div>
<svg style="left:870.0px;top:164.1px;" width="4" height="3" viewBox="0 0 4 3"><path d="M.4 .4L2.0 2.6L3.6 .4" stroke="#acaaa9" stroke-width=".9" fill="none"/></svg>
<div class="t" style="left:754px;top:178.98px;font-size:7.3px;color:#444;font-weight:400;transform:scaleX(0.990);transform-origin:0 0;">Drawing</div>
<svg style="left:877.5px;top:180.3px;" width="5" height="5" viewBox="0 0 5 5"><path d="M.5 4.5V.5h4 M2 2l2.5 2.5 M4.5 2.5v2h-2" stroke="#888" stroke-width=".8" fill="none"/></svg>
<div class="a" style="left:884px;top:130px;width:1px;height:55px;background:#d2d0cf;"></div>
<svg style="left:891px;top:132px;" width="10" height="10" viewBox="0 0 10 10"><circle cx="6" cy="4" r="3.3" stroke="#555" stroke-width="1" fill="none"/><path d="M3.6 6.4L.6 9.4" stroke="#555" stroke-width="1.2"/></svg>
<div class="t" style="left:903.8px;top:133.78px;font-size:7.3px;color:#383838;font-weight:400;transform:scaleX(1.070);transform-origin:0 0;">Find</div>
<svg style="left:890.5px;top:145.5px;" width="12" height="11" viewBox="0 0 12 11"><text x="3.5" y="5" font-size="5.5" fill="#8a4bc8" font-family="Liberation Sans">b</text><text x="6.5" y="10.5" font-size="5.5" fill="#2e7bd0" font-family="Liberation Sans">c</text><path d="M3 3c-2 0-2.6 1.5-2.6 3.5s1 3.5 3 3.5 M2.2 8.8l1 1.2-1.3.8" stroke="#2e7bd0" stroke-width=".8" fill="none"/></svg>
<div class="t" style="left:903.8px;top:147.68px;font-size:7.3px;color:#383838;font-weight:400;transform:scaleX(0.922);transform-origin:0 0;">Replace</div>
<svg style="left:935.6px;top:149.7px;" width="4" height="3" viewBox="0 0 4 3"><path d="M.4 .4L2.0 2.6L3.6 .4" stroke="#555" stroke-width=".9" fill="none"/></svg>
<svg style="left:893px;top:161px;" width="8" height="10" viewBox="0 0 8 10"><path d="M.8.8v8l2.2-2 1.6 3 1.2-.6-1.5-3h3z" stroke="#444" stroke-width=".9" fill="#fff"/></svg>
<div class="t" style="left:903.8px;top:162.38px;font-size:7.3px;color:#383838;font-weight:400;transform:scaleX(0.922);transform-origin:0 0;">Select</div>
<svg style="left:925.0px;top:164.3px;" width="4" height="3" viewBox="0 0 4 3"><path d="M.4 .4L2.0 2.6L3.6 .4" stroke="#555" stroke-width=".9" fill="none"/></svg>
<div class="t" style="left:905.5px;top:178.98px;font-size:7.3px;color:#444;font-weight:400;transform:scaleX(1.008);transform-origin:0 0;">Editing</div>
<div class="a" style="left:948.7px;top:130px;width:1px;height:55px;background:#d2d0cf;"></div>
<svg style="left:959px;top:131px;" width="15" height="22" viewBox="0 0 15 22"><rect x="3.5" y="1" width="8" height="13" rx="4" fill="#5a9fdc" stroke="#3b7fc0" stroke-width=".8"/><path d="M1.2 9.5c0 3.5 2.8 6 6.3 6s6.3-2.5 6.3-6 M7.5 15.5v4.5" stroke="#555" stroke-width="1" fill="none"/></svg>
<div class="t" style="left:954px;top:154.68px;font-size:7.3px;color:#383838;font-weight:400;transform:scaleX(1.078);transform-origin:0 0;">Dictate</div>
<svg style="left:963.5px;top:166.5px;" width="5" height="3" viewBox="0 0 5 3"><path d="M.4 .4L2.5 2.6L4.6 .4" stroke="#555" stroke-width=".9" fill="none"/></svg>
<div class="t" style="left:958px;top:178.98px;font-size:7.3px;color:#444;font-weight:400;transform:scaleX(0.924);transform-origin:0 0;">Voice</div>
<div class="a" style="left:984.3px;top:130px;width:1px;height:55px;background:#d2d0cf;"></div>
<svg style="left:994px;top:132px;" width="20" height="18" viewBox="0 0 20 18"><path d="M5 4h13.5v12H5z M5 8h13.5 M11 8v8" stroke="#acaaa9" stroke-width="1.2" fill="none"/><path d="M4 .5L1 6h3L2 11l6-7H5l1.5-3.5z" stroke="#acaaa9" stroke-width=".8" fill="#f3f1f0"/></svg>
<div class="t" style="left:989px;top:154.68px;font-size:7.3px;color:#b9b7b6;font-weight:400;transform:scaleX(1.027);transform-origin:0 0;">Designer</div>
<div class="t" style="left:988.5px;top:178.98px;font-size:7.3px;color:#444;font-weight:400;transform:scaleX(1.062);transform-origin:0 0;">Designer</div>
<div class="a" style="left:1026px;top:130px;width:1px;height:55px;background:#d2d0cf;"></div>
<svg style="left:1061px;top:181px;" width="7" height="4" viewBox="0 0 7 4"><path d="M.5 3.5L3.5 .5l3 3" stroke="#555" stroke-width="1" fill="none"/></svg>
<div class="t" style="left:83px;top:195.78px;font-size:7.3px;color:#444;font-weight:400;transform:scaleX(0.979);transform-origin:0 0;">AutoSave</div>
<div class="a" style="left:118.5px;top:194.5px;width:23.5px;height:9.5px;border:1px solid #555;border-radius:5px;background:#fff"></div>
<div class="a" style="left:121.5px;top:197px;width:4.5px;height:4.5px;border-radius:50%;background:#333"></div>
<div class="t" style="left:130px;top:196.31px;font-size:6.2px;color:#444;font-weight:400;transform:scaleX(1.044);transform-origin:0 0;">Off</div>
<svg style="left:150px;top:194px;" width="10" height="10" viewBox="0 0 10 10"><path d="M.5.5h7.5l1.5 1.5v7.5H.5z" fill="#b14fc5" stroke="#a040b8" stroke-width=".8"/><rect x="2.4" y="1" width="5" height="3" fill="#f3f1f0"/><rect x="2.4" y="6" width="5" height="3.5" fill="#f3f1f0"/></svg>
<svg style="left:168px;top:194px;" width="9" height="10" viewBox="0 0 9 10"><path d="M2.5 1L.6 3.2 2.8 5.3 M.8 3.2h4c2.2 0 3.8 1.6 3.8 3.4S7 9.8 4.5 9.8" stroke="#acaaa9" stroke-width=".9" fill="none"/></svg>
<svg style="left:178.25px;top:197.5px;" width="3.5" height="3" viewBox="0 0 3.5 3"><path d="M.4 .4L1.75 2.6L3.1 .4" stroke="#acaaa9" stroke-width=".9" fill="none"/></svg>
<svg style="left:192px;top:194px;" width="10" height="10" viewBox="0 0 10 10"><path d="M7.5 2.5A4.3 4.3 0 1 0 9 6 M7.5.5v2.3H5.3" stroke="#acaaa9" stroke-width=".9" fill="none"/></svg>
<svg style="left:210px;top:193.5px;" width="10" height="11" viewBox="0 0 10 11"><rect x=".8" y=".8" width="8.4" height="6" fill="#fff" stroke="#555" stroke-width=".9"/><path d="M4 2.3l2.5 1.5L4 5.3z" fill="#2e9e47"/><path d="M5 6.8v3.5 M2.5 10.3h5" stroke="#555" stroke-width=".9"/></svg>
<svg style="left:228px;top:194px;" width="10" height="10" viewBox="0 0 10 10"><path d="M2 9.5h2.3V8C2.2 7 1 5.4 1 4A4 4 0 0 1 9 4c0 1.4-1.2 3-3.3 4v1.5H8" stroke="#acaaa9" stroke-width=".9" fill="none"/></svg>
<svg style="left:247px;top:193.5px;" width="10" height="11" viewBox="0 0 10 11"><path d="M.8.8h5l2.4 2.4v6.5H.8z" fill="#fff" stroke="#555" stroke-width=".9"/><circle cx="6.5" cy="7.5" r="2.5" fill="#fff" stroke="#555" stroke-width=".8"/><path d="M5.5 7.5h2" stroke="#555" stroke-width=".8"/></svg>
<svg style="left:266.5px;top:197px;" width="5" height="5" viewBox="0 0 5 5"><path d="M.3.5h4.4 M.3 2h4.4L2.5 4.5z" stroke="#666" stroke-width=".6" fill="#666"/></svg>
<div class="a" style="left:78px;top:210px;width:995px;height:400px;background:#e6e6e6;"></div>
<div class="a" style="left:223px;top:211px;width:9px;height:396px;background:#dcdbdc;"></div>
<div class="a" style="left:223px;top:211px;width:9px;height:9.5px;background:#fff;border:1px solid #cfcfcf"></div>
<svg style="left:225px;top:213.5px;" width="5" height="3" viewBox="0 0 5 3"><path d="M0 3L2.5 0 5 3z" fill="#666"/></svg>
<div class="a" style="left:223px;top:220px;width:9px;height:18px;background:#fff;border:1px solid #cfcfcf;border-top:none"></div>
<div class="a" style="left:223px;top:599px;width:9px;height:8.5px;background:#fff"></div>
<svg style="left:225px;top:602px;" width="5" height="3" viewBox="0 0 5 3"><path d="M0 0L2.5 3 5 0z" fill="#666"/></svg>
<div class="a" style="left:234px;top:210px;width:2px;height:400px;background:#d9d9d9;"></div>
<div class="a" style="left:98px;top:220px;width:114px;height:86px;border:2px solid #c4472b;background:#fff"></div>
<div class="t" style="left:85.5px;top:219.58px;font-size:9.8px;color:#c4472b;font-weight:400;">1</div>
<div class="t" style="left:108px;top:235.58px;font-size:4.2px;color:#111;font-weight:700;transform:scaleX(1.096);transform-origin:0 0;">IT ALATI UPRAVLJANJA RIZICIMA</div>
<div class="t" style="left:109px;top:248.96px;font-size:3.2px;color:#222;font-weight:700;transform:scaleX(0.952);transform-origin:0 0;">mr. sc. Hrvoje Mijić</div>
<svg style="left:168px;top:261.6px" width="18.6" height="27.4" viewBox="0 0 80 118"><defs><linearGradient id="lg2" x1="0" y1="0" x2="0" y2="1"><stop offset="0" stop-color="#9dbfe8"/><stop offset=".55" stop-color="#3f8ed8"/><stop offset="1" stop-color="#0a77c6"/></linearGradient></defs><path d="M11.1 18.5h9.2l-3.1 86.4H7.5z" fill="#a2a1a6"/><path d="M26.9 13h9.1l-3.3 86.9h-9.1z" fill="#a2a1a6"/><path d="M47.1 16.3h6.9l4.2 87.2h-9.2z" fill="#a2a1a6"/><path d="M66.5 26h9.7l-1.4 86.6h-9.8z" fill="#a2a1a6"/><rect x="37.4" y="4.4" width="10.6" height="109.6" fill="url(#lg2)"/></svg>
<div class="t" style="left:155.5px;top:289.18px;font-size:4.2px;color:#8a8a8e;font-weight:700;transform:scaleX(0.785);transform-origin:0 0;">POSLOVNA UČINKOVITOST</div>
<div class="t" style="left:155.5px;top:293.86px;font-size:3.6px;color:#3b8bd4;font-weight:400;transform:scaleX(0.836);transform-origin:0 0;">Kontroling|Financije|Menadžment</div>
<div class="a" style="left:100px;top:317px;width:109.5px;height:82px;border:1px solid #d2d2d2;background:#fff"></div>
<div class="t" style="left:85.5px;top:314.98px;font-size:9.8px;color:#444;font-weight:400;">2</div>
<div class="a" style="left:153px;top:318px;width:1px;height:11px;background:#555;"></div>
<div class="a" style="left:153px;top:395px;width:1px;height:4px;background:#777;"></div>
<svg style="left:198px;top:319px;" width="7" height="11" viewBox="0 0 7 11"><rect x="0" y="1" width="1.3" height="9" fill="#a4a3a7"/><rect x="2" y="0" width="1.3" height="10" fill="#a4a3a7"/><rect x="3.4" y="0" width="1.3" height="11" fill="#3b8bd4"/><rect x="5.3" y="1" width="1.3" height="9.5" fill="#a4a3a7"/></svg>
<div class="a" style="left:155px;top:395.2px;width:50px;height:0.6px;background:#e4ebf3;"></div>
<div class="t" style="left:156.6px;top:324.86px;font-size:3.4px;color:#3a3030;font-weight:700;transform:scaleX(0.887);transform-origin:0 0;">SADRŽAJ</div>
<div class="t" style="left:153.0px;top:338.66px;font-size:3.2px;color:#444;font-weight:400;">1.</div>
<div class="t" style="left:158px;top:338.61px;font-size:3.3px;color:#1a1a1a;font-weight:700;transform:scaleX(0.919);transform-origin:0 0;">Pregled IT alata za upravljanje</div>
<div class="t" style="left:158px;top:341.81px;font-size:3.3px;color:#222;font-weight:700;transform:scaleX(0.814);transform-origin:0 0;">rizicima</div>
<div class="t" style="left:153.0px;top:349.06px;font-size:3.2px;color:#444;font-weight:400;">2.</div>
<div class="t" style="left:158px;top:349.01px;font-size:3.3px;color:#1a1a1a;font-weight:700;transform:scaleX(0.903);transform-origin:0 0;">Primjena Excela kod upravljanja</div>
<div class="t" style="left:158px;top:352.21px;font-size:3.3px;color:#222;font-weight:700;transform:scaleX(0.733);transform-origin:0 0;">rizicima</div>
<div class="t" style="left:153.0px;top:359.66px;font-size:3.2px;color:#444;font-weight:400;">3.</div>
<div class="t" style="left:158px;top:359.61px;font-size:3.3px;color:#1a1a1a;font-weight:700;transform:scaleX(0.871);transform-origin:0 0;">Programska rješenja unutar</div>
<div class="t" style="left:158px;top:362.81px;font-size:3.3px;color:#222;font-weight:700;transform:scaleX(0.818);transform-origin:0 0;">Poslovne</div>
<div class="t" style="left:153.0px;top:370.16px;font-size:3.2px;color:#444;font-weight:400;">4.</div>
<div class="t" style="left:158px;top:370.11px;font-size:3.3px;color:#1a1a1a;font-weight:700;transform:scaleX(0.906);transform-origin:0 0;">Integracija alata za analizu rizika</div>
<div class="t" style="left:158px;top:373.31px;font-size:3.3px;color:#222;font-weight:700;transform:scaleX(0.825);transform-origin:0 0;">i poslovne učinkovitosti</div>
<div class="a" style="left:100px;top:412px;width:109.5px;height:82px;border:1px solid #d2d2d2;background:#fff"></div>
<div class="t" style="left:85.5px;top:409.98px;font-size:9.8px;color:#444;font-weight:400;">3</div>
<div class="a" style="left:153px;top:413px;width:1px;height:11px;background:#555;"></div>
<div class="a" style="left:153px;top:490px;width:1px;height:4px;background:#777;"></div>
<svg style="left:198px;top:414px;" width="7" height="11" viewBox="0 0 7 11"><rect x="0" y="1" width="1.3" height="9" fill="#a4a3a7"/><rect x="2" y="0" width="1.3" height="10" fill="#a4a3a7"/><rect x="3.4" y="0" width="1.3" height="11" fill="#3b8bd4"/><rect x="5.3" y="1" width="1.3" height="9.5" fill="#a4a3a7"/></svg>
<div class="a" style="left:155px;top:490.2px;width:50px;height:0.6px;background:#e4ebf3;"></div>
<div class="t" style="left:156px;top:417.21px;font-size:3.3px;color:#111;font-weight:700;transform:scaleX(0.925);transform-origin:0 0;">1. Pregled IT alata za</div>
<div class="t" style="left:156px;top:420.41px;font-size:3.3px;color:#222;font-weight:400;transform:scaleX(0.998);transform-origin:0 0;">upravljanje rizicima</div>
<div class="t" style="left:154.5px;top:428.21px;font-size:3.3px;color:#111;font-weight:700;transform:scaleX(0.917);transform-origin:0 0;">1.1. Pregled IT alata za upravljanje</div>
<div class="t" style="left:159px;top:432.01px;font-size:3.3px;color:#333;font-weight:400;transform:scaleX(1.073);transform-origin:0 0;">rizicima</div>
<div class="t" style="left:154.5px;top:438.91px;font-size:3.3px;color:#cfcfcf;font-weight:400;transform:scaleX(1.002);transform-origin:0 0;">1.2. Excel kao osnovni IT alat za</div>
<div class="t" style="left:159px;top:442.41px;font-size:3.3px;color:#d2d2d2;font-weight:400;transform:scaleX(0.856);transform-origin:0 0;">upravljanje rizicima</div>
<div class="t" style="left:154.5px;top:449.91px;font-size:3.3px;color:#cfcfcf;font-weight:400;transform:scaleX(0.959);transform-origin:0 0;">1.3. Prednosti korištenja IT alata za</div>
<div class="t" style="left:159px;top:452.91px;font-size:3.3px;color:#d2d2d2;font-weight:400;transform:scaleX(0.820);transform-origin:0 0;">upravljanje rizicima</div>
<div class="t" style="left:154.5px;top:459.91px;font-size:3.3px;color:#cfcfcf;font-weight:400;transform:scaleX(0.935);transform-origin:0 0;">1.4. OSNOVNA PITANJA: Pregled IT</div>
<div class="t" style="left:159px;top:463.41px;font-size:3.3px;color:#d2d2d2;font-weight:400;transform:scaleX(0.889);transform-origin:0 0;">alata za upravljanje rizicima</div>
<div class="a" style="left:100px;top:507px;width:109.5px;height:82px;border:1px solid #d2d2d2;background:#fff"></div>
<div class="t" style="left:85.5px;top:504.98px;font-size:9.8px;color:#444;font-weight:400;">4</div>
<div class="a" style="left:153px;top:508px;width:1px;height:11px;background:#555;"></div>
<div class="a" style="left:153px;top:585px;width:1px;height:4px;background:#777;"></div>
<svg style="left:198px;top:509px;" width="7" height="11" viewBox="0 0 7 11"><rect x="0" y="1" width="1.3" height="9" fill="#a4a3a7"/><rect x="2" y="0" width="1.3" height="10" fill="#a4a3a7"/><rect x="3.4" y="0" width="1.3" height="11" fill="#3b8bd4"/><rect x="5.3" y="1" width="1.3" height="9.5" fill="#a4a3a7"/></svg>
<div class="a" style="left:155px;top:585.2px;width:50px;height:0.6px;background:#e4ebf3;"></div>
<div class="t" style="left:156px;top:512.46px;font-size:3.2px;color:#111;font-weight:700;transform:scaleX(0.970);transform-origin:0 0;">1.1. Pregled IT alata za</div>
<div class="t" style="left:156px;top:515.96px;font-size:3.2px;color:#222;font-weight:400;transform:scaleX(0.996);transform-origin:0 0;">upravljanje rizicima</div>
<div class="t" style="left:108px;top:530.47px;font-size:4.0px;color:#2457d0;font-weight:700;transform:scaleX(1.062);transform-origin:0 0;">Upravljanje rizicima se događa i kad mi to ne</div>
<div class="t" style="left:112px;top:535.47px;font-size:4.0px;color:#2457d0;font-weight:700;transform:scaleX(1.044);transform-origin:0 0;">želimo</div>
<div class="t" style="left:107.5px;top:545.46px;font-size:3.6px;color:#2457d0;font-weight:700;">•</div>
<div class="t" style="left:107.5px;top:560.46px;font-size:3.6px;color:#2457d0;font-weight:700;">•</div>
<div class="t" style="left:112px;top:545.46px;font-size:3.6px;color:#555;font-weight:400;transform:scaleX(1.191);transform-origin:0 0;">Svi mi svjesni toga ili ne, željeli mi to ili ne</div>
<div class="t" style="left:112px;top:550.46px;font-size:3.6px;color:#555;font-weight:400;transform:scaleX(1.196);transform-origin:0 0;">upravljamo rizicima.</div>
<div class="t" style="left:112px;top:560.46px;font-size:3.6px;color:#555;font-weight:400;transform:scaleX(1.185);transform-origin:0 0;">Svaka aktivnost koju provodimo sadrži u sebi</div>
<div class="t" style="left:112px;top:565.56px;font-size:3.6px;color:#555;font-weight:400;transform:scaleX(1.145);transform-origin:0 0;">određenje prema riziku.</div>
<svg style="left:188.5px;top:569px;" width="9" height="10" viewBox="0 0 9 10"><path d="M4.5 .3c2.5 0 4.2 1.8 4.2 4 0 1.2-.6 2-1 2.6v2.8H4.2V8.3H2.3V6.5L.6 5.9 2 4.2C2 2 2.8.3 4.5.3z" fill="#111"/></svg>
<div class="a" style="left:100px;top:602px;width:109.5px;height:8px;border:1px solid #d2d2d2;border-bottom:none;background:#fff"></div>
<div class="t" style="left:85.5px;top:600.28px;font-size:9.8px;color:#444;font-weight:400;">5</div>
<div class="a" style="left:153px;top:603px;width:1px;height:6px;background:#555;"></div>
<div class="a" style="left:156px;top:608.5px;width:27px;height:1.0px;background:#777;"></div>
<svg style="left:198px;top:604px;" width="7" height="6" viewBox="0 0 7 6"><rect x="0" y="1" width="1.3" height="9" fill="#a4a3a7"/><rect x="2" y="0" width="1.3" height="10" fill="#a4a3a7"/><rect x="3.4" y="0" width="1.3" height="11" fill="#3b8bd4"/><rect x="5.3" y="1" width="1.3" height="9.5" fill="#a4a3a7"/></svg>
<div class="a" style="left:412.5px;top:219.5px;width:473.5px;height:355px;background:#fff;border:1px solid #d6d6d6;box-shadow:0 0 1px rgba(0,0,0,.08)"></div>
<div class="t" style="left:446.5px;top:275.94px;font-size:18.8px;color:#111;font-weight:700;transform:scaleX(1.061);transform-origin:0 0;">IT ALATI UPRAVLJANJA RIZICIMA</div>
<div class="t" style="left:449.5px;top:335.33px;font-size:12.6px;color:#111;font-weight:700;transform:scaleX(1.043);transform-origin:0 0;">mr. sc. Hrvoje Mijić</div>
<svg style="left:705px;top:390px;" width="80" height="118" viewBox="0 0 80 118"><defs><linearGradient id="lg" x1="0" y1="0" x2="0" y2="1"><stop offset="0" stop-color="#9dbfe8"/><stop offset=".55" stop-color="#3f8ed8"/><stop offset="1" stop-color="#0a77c6"/></linearGradient></defs><path d="M11.1 18.5h9.2l-3.1 86.4H7.5z" fill="#a2a1a6"/><path d="M26.9 13h9.1l-3.3 86.9h-9.1z" fill="#a2a1a6"/><path d="M47.1 16.3h6.9l4.2 87.2h-9.2z" fill="#a2a1a6"/><path d="M66.5 26h9.7l-1.4 86.6h-9.8z" fill="#a2a1a6"/><rect x="37.4" y="4.4" width="10.6" height="109.6" fill="url(#lg)"/></svg>
<div class="t" style="left:651.5px;top:511.54px;font-size:16.3px;color:#7b7b80;font-weight:700;transform:scaleX(0.888);transform-origin:0 0;">POSLOVNA UČINKOVITOST</div>
<div class="t" style="left:651.5px;top:529.96px;font-size:14.2px;color:#2a83cc;font-weight:400;transform:scaleX(0.911);transform-origin:0 0;">Kontroling<span style="color:#8a8a8a;margin:0 1px">|</span>Financije<span style="color:#8a8a8a;margin:0 1px">|</span>Menadžment</div>
<svg style="left:236px;top:397px;" width="826" height="1" viewBox="0 0 826 1"><path d="M0 .5H826" stroke="#999" stroke-width="1" stroke-dasharray="1.8 1.9"/></svg>
<svg style="left:649.5px;top:210px;" width="1" height="376" viewBox="0 0 1 376"><path d="M.5 0V376" stroke="#9a9a9a" stroke-width="1" stroke-dasharray="1.5 2.5"/></svg>
<svg style="left:580.5px;top:374.5px;" width="10" height="13" viewBox="0 0 10 13"><path d="M.8.8v10.2l2.6-2.4 1.8 3.8 1.7-.8-1.8-3.7h3.4z" fill="#fff" stroke="#555" stroke-width="1"/></svg>
<div class="a" style="left:1063px;top:211px;width:9px;height:332px;background:#dcdbdc;"></div>
<div class="a" style="left:1063px;top:211px;width:9px;height:9.5px;background:#fff;border:1px solid #cfcfcf"></div>
<svg style="left:1065.5px;top:214px;" width="4" height="3" viewBox="0 0 4 3"><path d="M0 3L2 0 4 3z" fill="#666"/></svg>
<div class="a" style="left:1063px;top:220.5px;width:9px;height:10px;background:#fff;border:1px solid #cfcfcf;border-top:none"></div>
<div class="a" style="left:1063px;top:542.5px;width:9px;height:8.5px;background:#fff"></div>
<svg style="left:1065.5px;top:545.5px;" width="4" height="3" viewBox="0 0 4 3"><path d="M0 0L2 3 4 0z" fill="#666"/></svg>
<svg style="left:1065px;top:556px;" width="5" height="5" viewBox="0 0 5 5"><path d="M0 2.5L2.5 0 5 2.5z M0 5L2.5 2.5 5 5z" fill="#777"/><path d="M0 .2h5" stroke="#777" stroke-width=".6"/></svg>
<svg style="left:1065px;top:565.5px;" width="5" height="5" viewBox="0 0 5 5"><path d="M0 0L2.5 2.5 5 0z M0 2.5L2.5 5 5 2.5z" fill="#777"/><path d="M0 4.8h5" stroke="#777" stroke-width=".6"/></svg>
<div class="a" style="left:1072px;top:210px;width:1px;height:400px;background:#f5f5f5;"></div>
<div class="a" style="left:236px;top:586px;width:837px;height:1px;background:#cbcbcb;"></div>
<div class="t" style="left:242.8px;top:593.06px;font-size:9.0px;color:#666;font-weight:400;transform:scaleX(1.009);transform-origin:0 0;">Click to add notes</div>
<div class="a" style="left:78px;top:609px;width:995px;height:1px;background:#dad8d7;"></div>
<div class="a" style="left:78px;top:610px;width:995px;height:13px;background:#f3f1f0;"></div>
<div class="t" style="left:83.3px;top:612.93px;font-size:7.2px;color:#555;font-weight:400;transform:scaleX(0.981);transform-origin:0 0;">Slide 1 of 88</div>
<div class="t" style="left:142.2px;top:612.93px;font-size:7.2px;color:#555;font-weight:400;transform:scaleX(0.986);transform-origin:0 0;">Croatian (Croatia)</div>
<svg style="left:207.5px;top:611px;" width="10" height="11" viewBox="0 0 10 11"><circle cx="5" cy="5.5" r="3.6" stroke="#666" stroke-width=".9" fill="none" stroke-dasharray="1.5 .8"/><path d="M3.5 4.2L5 9l1.4-2.6 2.4 2.4" stroke="#555" stroke-width=".9" fill="none"/></svg>
<div class="t" style="left:220.3px;top:612.93px;font-size:7.2px;color:#555;font-weight:400;transform:scaleX(0.968);transform-origin:0 0;">Accessibility: Unavailable</div>
<svg style="left:804.5px;top:612px;" width="10" height="9" viewBox="0 0 10 9"><path d="M.5 4.5h9 M.5 6.5h9 M.5 8.5h9 M2.5 3l2.5-2.5L7.5 3" stroke="#666" stroke-width=".8" fill="none"/></svg>
<div class="t" style="left:816.2px;top:612.73px;font-size:7.4px;color:#444;font-weight:400;transform:scaleX(0.973);transform-origin:0 0;">Notes</div>
<div class="a" style="left:847px;top:610px;width:24px;height:13px;background:#d8d6d5;"></div>
<svg style="left:854px;top:612px;" width="10" height="9" viewBox="0 0 10 9"><rect x=".5" y=".5" width="9" height="8" fill="none" stroke="#666" stroke-width=".9"/><rect x="2.5" y="2.5" width="5" height="3.5" fill="none" stroke="#666" stroke-width=".8"/></svg>
<svg style="left:879px;top:611.5px;" width="10" height="10" viewBox="0 0 10 10"><rect x=".5" y=".5" width="3.8" height="3.8" fill="none" stroke="#666" stroke-width=".8"/><rect x="5.7" y=".5" width="3.8" height="3.8" fill="none" stroke="#666" stroke-width=".8"/><rect x=".5" y="5.7" width="3.8" height="3.8" fill="none" stroke="#666" stroke-width=".8"/><rect x="5.7" y="5.7" width="3.8" height="3.8" fill="none" stroke="#666" stroke-width=".8"/></svg>
<svg style="left:903.5px;top:611.5px;" width="10" height="10" viewBox="0 0 10 10"><rect x=".5" y=".5" width="4" height="9" fill="none" stroke="#666" stroke-width=".8"/><rect x="5.5" y=".5" width="4" height="9" fill="none" stroke="#666" stroke-width=".8"/></svg>
<svg style="left:928px;top:611.5px;" width="10" height="10" viewBox="0 0 10 10"><rect x=".5" y=".5" width="9" height="5.5" fill="none" stroke="#666" stroke-width=".8"/><path d="M5 6v3.5 M3 9.5h4 M0 .5h10" stroke="#666" stroke-width=".8"/></svg>
<div class="a" style="left:950px;top:616px;width:5px;height:1px;background:#777;"></div>
<div class="a" style="left:958px;top:616px;width:62px;height:1px;background:#888;"></div>
<div class="a" style="left:980.5px;top:612.5px;width:3px;height:7px;background:#444;"></div>
<div class="a" style="left:990px;top:614.5px;width:1px;height:3.5px;background:#777;"></div>
<div class="a" style="left:1022.5px;top:616px;width:5px;height:1px;background:#777;"></div>
<div class="a" style="left:1024.5px;top:614px;width:1px;height:5px;background:#777;"></div>
<div class="t" style="left:1036.2px;top:612.93px;font-size:7.2px;color:#555;font-weight:400;transform:scaleX(0.889);transform-origin:0 0;">80%</div>
<svg style="left:1059.5px;top:611px;" width="11" height="11" viewBox="0 0 11 11"><path d="M5.5 0L7.5 2.5h-4z M5.5 11L7.5 8.5h-4z M0 5.5L2.5 3.5v4z M11 5.5L8.5 3.5v4z" fill="#777"/><rect x="3" y="3.5" width="5" height="4" fill="#eee" stroke="#777" stroke-width=".7"/></svg>
<svg style="left:208px;top:104px;" width="40" height="40" viewBox="0 0 40 40"><circle cx="20" cy="20" r="17.8" fill="none" stroke="#b0b0b0" stroke-width="2.2"/><circle cx="20" cy="20" r="17.8" fill="none" stroke="#fff" stroke-width="1.2"/><path d="M20 15.5v9 M15.5 20h9" stroke="#9a9a9a" stroke-width="3"/><path d="M20 15.9v8.2 M15.9 20h8.2" stroke="#fff" stroke-width="1.8"/></svg>
<div class="a" style="left:0px;top:623px;width:1153px;height:27px;background:#1d1e20;"></div>
<svg style="left:9px;top:630.5px;" width="14" height="14" viewBox="0 0 14 14"><defs><linearGradient id="wl" x1="0" y1="0" x2="1" y2="1"><stop offset="0" stop-color="#6fd3ff"/><stop offset="1" stop-color="#1a9ee8"/></linearGradient></defs><rect x="0" y="0" width="6.6" height="6.6" fill="url(#wl)"/><rect x="7.4" y="0" width="6.6" height="6.6" fill="url(#wl)"/><rect x="0" y="7.4" width="6.6" height="6.6" fill="url(#wl)"/><rect x="7.4" y="7.4" width="6.6" height="6.6" fill="url(#wl)"/></svg>
<svg style="left:36px;top:630px;" width="13" height="13" viewBox="0 0 13 13"><circle cx="7.3" cy="5.6" r="4.6" fill="#2a2a2a" stroke="#e6e6e6" stroke-width="1.4"/><path d="M4 9L.8 12.2" stroke="#e6e6e6" stroke-width="1.6" stroke-linecap="round"/></svg>
<svg style="left:62px;top:630px;" width="14" height="14.5" viewBox="0 0 14 14.5"><rect width="14" height="14.5" fill="#ef443b"/><path d="M5.2 4.2L8.2 7.2 5.2 10.2 2.2 7.2z" fill="#fff"/><path d="M8.6 4.2l3 3-3 3" stroke="#fff" stroke-width="1.2" fill="none"/></svg>
<svg style="left:88px;top:629px;" width="15" height="15" viewBox="0 0 15 15"><defs><linearGradient id="eg" x1="0" y1="1" x2="1" y2="0"><stop offset="0" stop-color="#0c59a4"/><stop offset=".5" stop-color="#1b9de2"/><stop offset="1" stop-color="#5ad05e"/></linearGradient></defs><circle cx="7.5" cy="7.5" r="7.3" fill="url(#eg)"/><circle cx="8.3" cy="9" r="2.6" fill="#1d1e20"/><path d="M2 10c1 3 4 4.5 6.5 4.2" stroke="#0a3f7a" stroke-width="2" fill="none"/></svg>
<div class="a" style="left:94px;top:647.5px;width:3px;height:1.3px;background:#9a9a9a;"></div>
<svg style="left:114.5px;top:629px;" width="15" height="15" viewBox="0 0 15 15"><circle cx="7.5" cy="7.5" r="7.2" fill="#dd4b3e"/><path d="M7.5 7.5L1.2 11A7.2 7.2 0 0 0 7.5 14.7z" fill="#1ea362"/><path d="M7.5 7.5L1.2 11A7.2 7.2 0 0 1 .8 4.2z" fill="#1ea362"/><path d="M7.5 7.5h7.2A7.2 7.2 0 0 1 7.5 14.7z" fill="#ffce44"/><circle cx="7.5" cy="7.5" r="3.5" fill="#fff"/><circle cx="7.5" cy="7.5" r="2.6" fill="#4c8bf5"/></svg>
<svg style="left:141.5px;top:630.5px;" width="15" height="13" viewBox="0 0 15 13"><path d="M0 1.5h5l1.5 1.5H15v10H0z" fill="#e8b93a"/><rect x="0" y="4" width="15" height="9" fill="#fbd85a"/><rect x="3" y="8" width="9" height="5" fill="#2a7fd8"/></svg>
<div class="a" style="left:147px;top:647.5px;width:3px;height:1.3px;background:#9a9a9a;"></div>
<svg style="left:168px;top:630px;" width="15" height="14" viewBox="0 0 15 14"><rect x="5" y="1" width="10" height="12" fill="#1a73c8"/><rect x="5" y="6" width="10" height="7" fill="#28a8ea"/><rect x="0" y="3" width="8" height="8" fill="#0f5fb0"/><circle cx="4" cy="7" r="2.2" stroke="#fff" stroke-width="1.1" fill="none"/></svg>
<svg style="left:194.5px;top:629.5px;" width="15" height="15" viewBox="0 0 15 15"><circle cx="8.5" cy="7.5" r="6.5" fill="#ed6c47"/><path d="M8.5 1a6.5 6.5 0 0 1 6.5 6.5H8.5z" fill="#ff8f6b"/><rect x="0" y="3.5" width="8" height="8" fill="#c43e1c"/><text x="1.8" y="10" font-size="7" font-weight="700" fill="#fff" font-family="Liberation Sans">P</text></svg>
<svg style="left:221px;top:630px;" width="15" height="14" viewBox="0 0 15 14"><rect x="4" y="0" width="11" height="14" fill="#21a366"/><rect x="4" y="7" width="11" height="7" fill="#107c41"/><rect x="0" y="3" width="8" height="8" fill="#185c37"/><text x="1.5" y="9.8" font-size="7" font-weight="700" fill="#fff" font-family="Liberation Sans">X</text></svg>
<svg style="left:247.5px;top:630px;" width="15" height="14" viewBox="0 0 15 14"><rect x="4" y="0" width="11" height="14" fill="#41a5ee"/><rect x="4" y="7" width="11" height="7" fill="#185abd"/><rect x="0" y="3" width="8.5" height="8" fill="#2b5fc4"/><text x=".6" y="9.8" font-size="7" font-weight="700" fill="#fff" font-family="Liberation Sans">W</text></svg>
<div class="a" style="left:253.5px;top:647.5px;width:3px;height:1.3px;background:#9a9a9a;"></div>
<svg style="left:274.5px;top:630px;" width="15" height="15" viewBox="0 0 15 15"><path d="M7.5.8C3.5.8.5 3.5.5 7c0 3.5 2.5 6 5 6 1.5 0 1.5-1.5 1-2.5S7 8.5 8.5 8.5h2.5c2 0 3.5-1 3.5-3C14.5 2.5 11.5.8 7.5.8z" fill="#2aa3e8"/><circle cx="4" cy="5.5" r="1.2" fill="#e94a3f"/><circle cx="7" cy="3.2" r="1.2" fill="#f5b73b"/><circle cx="10.5" cy="3.8" r="1.2" fill="#5ac85a"/><path d="M12.5 6.5L10.5 14.5" stroke="#c8a060" stroke-width="1.4"/></svg>
<svg style="left:302.5px;top:629.5px;" width="11" height="15" viewBox="0 0 11 15"><rect width="11" height="15" rx="1" fill="#6c7a86"/><rect x="1.5" y="1.5" width="8" height="3" fill="#8ad4f8"/><g fill="#e6e6e6"><rect x="1.5" y="6" width="2" height="1.8"/><rect x="4.5" y="6" width="2" height="1.8"/><rect x="1.5" y="9" width="2" height="1.8"/><rect x="4.5" y="9" width="2" height="1.8"/><rect x="1.5" y="12" width="2" height="1.8"/><rect x="4.5" y="12" width="2" height="1.8"/></g><rect x="7.5" y="6" width="2" height="7.8" fill="#3a7fc8"/></svg>
<svg style="left:328px;top:630px;" width="13" height="14" viewBox="0 0 13 14"><path d="M2 1h9l1 6H1z" fill="#bfc6cc"/><rect x="2.5" y="2" width="8" height="4" fill="#eef3f6"/><path d="M0 7h13v6H0z" fill="#dfe6ea"/><rect x="0" y="9.5" width="13" height="1" fill="#58c0e8"/><circle cx="11" cy="12" r=".8" fill="#2e9e47"/></svg>
<div class="a" style="left:350px;top:625px;width:21px;height:24px;background:#2c2c2e;border-radius:3px"></div>
<div class="a" style="left:353.5px;top:629.5px;width:15px;height:15px;border-radius:50%;background:#0b5cff"></div>
<div class="t" style="left:355.5px;top:635.36px;font-size:3.4px;color:#e8f0ff;font-weight:700;transform:scaleX(1.185);transform-origin:0 0;">zoom</div>
<div class="a" style="left:356px;top:647.5px;width:10px;height:1.5px;background:#a8b8d0;"></div>
<svg style="left:1011px;top:635px;" width="7" height="4" viewBox="0 0 7 4"><path d="M.5 3.5L3.5 .5l3 3" stroke="#eaeaea" stroke-width="1" fill="none"/></svg>
<svg style="left:1024px;top:632.5px;" width="10" height="9" viewBox="0 0 10 9"><path d="M8 3A3.7 3.7 0 0 0 1.5 3.2 M1 6a3.7 3.7 0 0 0 6 1.5 M7 .7L8 3 5.5 3.5 M1.5 8.5L1 6l2.5-.5" stroke="#eaeaea" stroke-width=".9" fill="none"/></svg>
<div class="a" style="left:1029.5px;top:637.8px;width:4.2px;height:4.2px;border-radius:50%;background:#f5a000"></div>
<svg style="left:1042px;top:632px;" width="8" height="11" viewBox="0 0 8 11"><path d="M2.5.6h3v6.2a1.5 1.5 0 0 1-3 0z M.6 5.5c0 2 1.4 3.8 3.4 3.8s3.4-1.8 3.4-3.8 M4 9.3v1.5" stroke="#eaeaea" stroke-width=".9" fill="none"/></svg>
<svg style="left:1059.5px;top:632px;" width="11" height="11" viewBox="0 0 11 11"><path d="M6.5 1.5H.8v7h5.7 M2.5 10.5h3 M8.5 1v9.5 M7.3 1.5h2.4v3H7.3z" stroke="#eaeaea" stroke-width="1" fill="none"/></svg>
<svg style="left:1074.5px;top:632.5px;" width="10" height="9" viewBox="0 0 10 9"><path d="M.6 3h2L5.3.8v7.4L2.6 6H.6z M7 2.8c.7.7.7 2.7 0 3.4 M8.6 1.5c1.2 1.3 1.2 4.7 0 6" stroke="#eaeaea" stroke-width=".9" fill="none"/></svg>
<div class="t" style="left:1114.4px;top:629.62px;font-size:6.4px;color:#f0f0f0;font-weight:400;transform:scaleX(0.931);transform-origin:0 0;">9:01</div>
<div class="t" style="left:1093.5px;top:639.32px;font-size:6.4px;color:#f0f0f0;font-weight:400;transform:scaleX(0.976);transform-origin:0 0;">14.11.2022.</div>
<div class="a" style="left:1133.2px;top:632.5px;width:9.6px;height:9.6px;border-radius:50%;background:#a9b6c3"></div>
<div class="t" style="left:1136.3px;top:634.51px;font-size:6px;color:#1d1e20;font-weight:700;transform:scaleX(1.107);transform-origin:0 0;">3</div>
</body></html>
